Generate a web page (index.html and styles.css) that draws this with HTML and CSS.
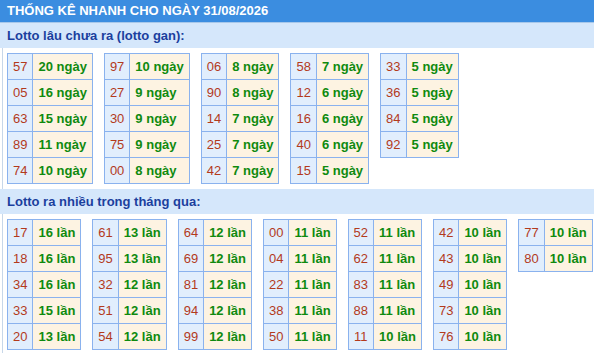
FILE: index.html
```html
<!DOCTYPE html>
<html lang="vi">
<head>
<meta charset="utf-8">
<link rel="stylesheet" href="styles.css">
</head>
<body>
<div class="page">
  <div class="head">THỐNG KÊ NHANH CHO NGÀY 31/08/2026</div>
  <div class="title">Lotto lâu chưa ra (lotto gan):</div>
  <div class="content">
    <table class="t"><tr><td class="n">57</td><td class="v">20 ngày</td></tr><tr><td class="n">05</td><td class="v">16 ngày</td></tr><tr><td class="n">63</td><td class="v">15 ngày</td></tr><tr><td class="n">89</td><td class="v">11 ngày</td></tr><tr><td class="n">74</td><td class="v">10 ngày</td></tr></table>
    <table class="t"><tr><td class="n">97</td><td class="v">10 ngày</td></tr><tr><td class="n">27</td><td class="v">9 ngày</td></tr><tr><td class="n">30</td><td class="v">9 ngày</td></tr><tr><td class="n">75</td><td class="v">9 ngày</td></tr><tr><td class="n">00</td><td class="v">8 ngày</td></tr></table>
    <table class="t"><tr><td class="n">06</td><td class="v">8 ngày</td></tr><tr><td class="n">90</td><td class="v">8 ngày</td></tr><tr><td class="n">14</td><td class="v">7 ngày</td></tr><tr><td class="n">25</td><td class="v">7 ngày</td></tr><tr><td class="n">42</td><td class="v">7 ngày</td></tr></table>
    <table class="t"><tr><td class="n">58</td><td class="v">7 ngày</td></tr><tr><td class="n">12</td><td class="v">6 ngày</td></tr><tr><td class="n">16</td><td class="v">6 ngày</td></tr><tr><td class="n">40</td><td class="v">6 ngày</td></tr><tr><td class="n">15</td><td class="v">5 ngày</td></tr></table>
    <table class="t"><tr><td class="n">33</td><td class="v">5 ngày</td></tr><tr><td class="n">36</td><td class="v">5 ngày</td></tr><tr><td class="n">84</td><td class="v">5 ngày</td></tr><tr><td class="n">92</td><td class="v">5 ngày</td></tr></table>
  </div>
  <div class="title">Lotto ra nhiều trong tháng qua:</div>
  <div class="content">
    <table class="t"><tr><td class="n">17</td><td class="v">16 lần</td></tr><tr><td class="n">18</td><td class="v">16 lần</td></tr><tr><td class="n">34</td><td class="v">16 lần</td></tr><tr><td class="n">33</td><td class="v">15 lần</td></tr><tr><td class="n">20</td><td class="v">13 lần</td></tr></table>
    <table class="t"><tr><td class="n">61</td><td class="v">13 lần</td></tr><tr><td class="n">95</td><td class="v">13 lần</td></tr><tr><td class="n">32</td><td class="v">12 lần</td></tr><tr><td class="n">51</td><td class="v">12 lần</td></tr><tr><td class="n">54</td><td class="v">12 lần</td></tr></table>
    <table class="t"><tr><td class="n">64</td><td class="v">12 lần</td></tr><tr><td class="n">69</td><td class="v">12 lần</td></tr><tr><td class="n">81</td><td class="v">12 lần</td></tr><tr><td class="n">94</td><td class="v">12 lần</td></tr><tr><td class="n">99</td><td class="v">12 lần</td></tr></table>
    <table class="t"><tr><td class="n">00</td><td class="v">11 lần</td></tr><tr><td class="n">04</td><td class="v">11 lần</td></tr><tr><td class="n">22</td><td class="v">11 lần</td></tr><tr><td class="n">38</td><td class="v">11 lần</td></tr><tr><td class="n">50</td><td class="v">11 lần</td></tr></table>
    <table class="t"><tr><td class="n">52</td><td class="v">11 lần</td></tr><tr><td class="n">62</td><td class="v">11 lần</td></tr><tr><td class="n">83</td><td class="v">11 lần</td></tr><tr><td class="n">88</td><td class="v">11 lần</td></tr><tr><td class="n">11</td><td class="v">10 lần</td></tr></table>
    <table class="t"><tr><td class="n">42</td><td class="v">10 lần</td></tr><tr><td class="n">43</td><td class="v">10 lần</td></tr><tr><td class="n">49</td><td class="v">10 lần</td></tr><tr><td class="n">73</td><td class="v">10 lần</td></tr><tr><td class="n">76</td><td class="v">10 lần</td></tr></table>
    <table class="t"><tr><td class="n">77</td><td class="v">10 lần</td></tr><tr><td class="n">80</td><td class="v">10 lần</td></tr></table>
  </div>
</div>
</body>
</html>
```
FILE: styles.css
```css
html, body {
  margin: 0;
  padding: 0;
  background: #ffffff;
}
body {
  font-family: "Liberation Sans", Arial, sans-serif;
  font-size: 13px;
}
.page {
  width: 594px;
}
.head {
  height: 22px;
  line-height: 22px;
  background: #3b8de0;
  color: #ffffff;
  font-weight: bold;
  padding-left: 7px;
  border-bottom: 1px solid #a8c8ea;
}
.title {
  height: 25px;
  line-height: 26px;
  background: #d5e7fb;
  color: #1b3f9e;
  font-weight: bold;
  padding-left: 7px;
}
.content {
  margin-left: 2px;
  border-left: 1px solid #c7d7e9;
  padding: 5px 0 5px 4px;
  display: flex;
  flex-wrap: wrap;
  align-items: flex-start;
  gap: 11px;
}
.t {
  border-collapse: collapse;
}
.t td {
  border: 1px solid #8ab2ee;
  height: 25px;
  padding: 0 5px;
  line-height: 25px;
  box-sizing: border-box;
}
.t .n {
  background: #e1eefd;
  color: #b33a1c;
  text-align: center;
}
.t .v {
  background: #fdf3e2;
  color: #0f8a0f;
  font-weight: bold;
}
```
